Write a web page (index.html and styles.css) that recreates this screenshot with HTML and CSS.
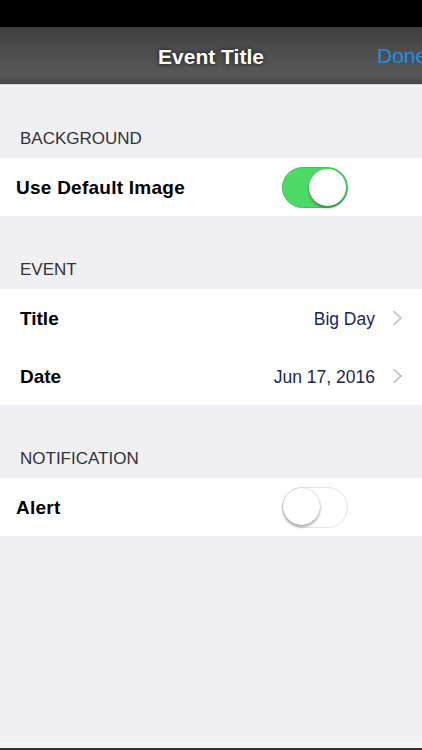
FILE: index.html
```html
<!DOCTYPE html>
<html>
<head>
<meta charset="utf-8">
<link rel="stylesheet" href="styles.css">
</head>
<body>
<div class="status"></div>
<header class="nav">
  <div class="nav-title">Event Title</div>
  <div class="nav-done">Done</div>
</header>
<main class="content">
  <section class="group">
    <div class="group-head">BACKGROUND</div>
    <div class="rows">
      <div class="row row-switch">
        <span class="label">Use Default Image</span>
        <span class="switch on"><span class="knob"></span></span>
      </div>
    </div>
  </section>
  <section class="group">
    <div class="group-head">EVENT</div>
    <div class="rows">
      <div class="row row-nav">
        <span class="label">Title</span>
        <span class="value">Big Day</span>
        <svg class="chev" width="11" height="16" viewBox="0 0 11 16"><path d="M1.5 1.2 L9 8 L1.5 14.8" fill="none" stroke="#c4c4c9" stroke-width="1.8"/></svg>
      </div>
      <div class="row row-nav">
        <span class="label">Date</span>
        <span class="value">Jun 17, 2016</span>
        <svg class="chev" width="11" height="16" viewBox="0 0 11 16"><path d="M1.5 1.2 L9 8 L1.5 14.8" fill="none" stroke="#c4c4c9" stroke-width="1.8"/></svg>
      </div>
    </div>
  </section>
  <section class="group">
    <div class="group-head">NOTIFICATION</div>
    <div class="rows">
      <div class="row row-switch">
        <span class="label">Alert</span>
        <span class="switch off"><span class="knob"></span></span>
      </div>
    </div>
  </section>
</main>
<div class="bottom"></div>
</body>
</html>
```
FILE: styles.css
```css
html, body {
  margin: 0;
  padding: 0;
}
body {
  width: 422px;
  height: 750px;
  display: flex;
  flex-direction: column;
  background: #efeff4;
  font-family: "Liberation Sans", Arial, sans-serif;
  overflow: hidden;
}
.status {
  height: 27px;
  background: #000;
  flex: none;
}
.nav {
  height: 57px;
  flex: none;
  background: linear-gradient(#3e3e3e 0%, #4d4d4d 40%, #575757 85%, #444 100%);
  border-bottom: 1px solid #d8d8dc;
  display: flex;
  align-items: center;
  justify-content: center;
  position: relative;
  overflow: hidden;
}
.nav-title {
  color: #fff;
  font-weight: bold;
  font-size: 21px;
  padding-top: 2px;
  text-shadow: 0 0 4px rgba(0,0,0,0.8);
}
.nav-done {
  position: absolute;
  left: 377px;
  top: 17px;
  color: #1a8ff0;
  font-size: 21px;
  white-space: nowrap;
}
.content {
  flex: 1;
}
.group-head {
  height: 73px;
  box-sizing: border-box;
  display: flex;
  align-items: flex-end;
  padding: 0 0 9px 20px;
  font-size: 17px;
  line-height: 20px;
  color: #333;
}
.rows {
  background: #fff;
}
.row {
  height: 58px;
  display: flex;
  align-items: center;
}
.row-switch {
  padding-left: 16px;
}
.row-nav {
  padding-left: 20px;
  padding-right: 19px;
}
.label {
  font-weight: bold;
  font-size: 19px;
  color: #000;
  padding-top: 2px;
}
.row-switch .label {
  letter-spacing: 0.25px;
}
.row-nav .label {
  flex: 1;
}
.value {
  font-size: 17.5px;
  color: #1b2555;
  margin-right: 17px;
  padding-top: 2px;
}
.chev {
  display: block;
}
.row-switch .label {
  width: 266px;
}
.switch {
  width: 66px;
  height: 41px;
  border-radius: 21px;
  box-sizing: border-box;
  position: relative;
  display: block;
}
.switch.on {
  background: #4cd964;
  border: 1px solid #3fc456;
}
.switch.off {
  background: #fff;
  border: 1.5px solid #e3e3e6;
}
.knob {
  position: absolute;
  top: 1px;
  width: 37px;
  height: 37px;
  border-radius: 50%;
  background: #fff;
}
.switch.on .knob {
  right: 1px;
  box-shadow: 0 2px 3px rgba(0,0,0,0.35);
}
.switch.off .knob {
  left: 0px;
  top: 0.5px;
  box-shadow: 0 2px 3px rgba(0,0,0,0.35), 0 0 1px rgba(0,0,0,0.3);
}
.bottom {
  flex: none;
  height: 8px;
  background: linear-gradient(#f4f4f8 0%, #f4f4f8 70%, #333 70%);
}
```
